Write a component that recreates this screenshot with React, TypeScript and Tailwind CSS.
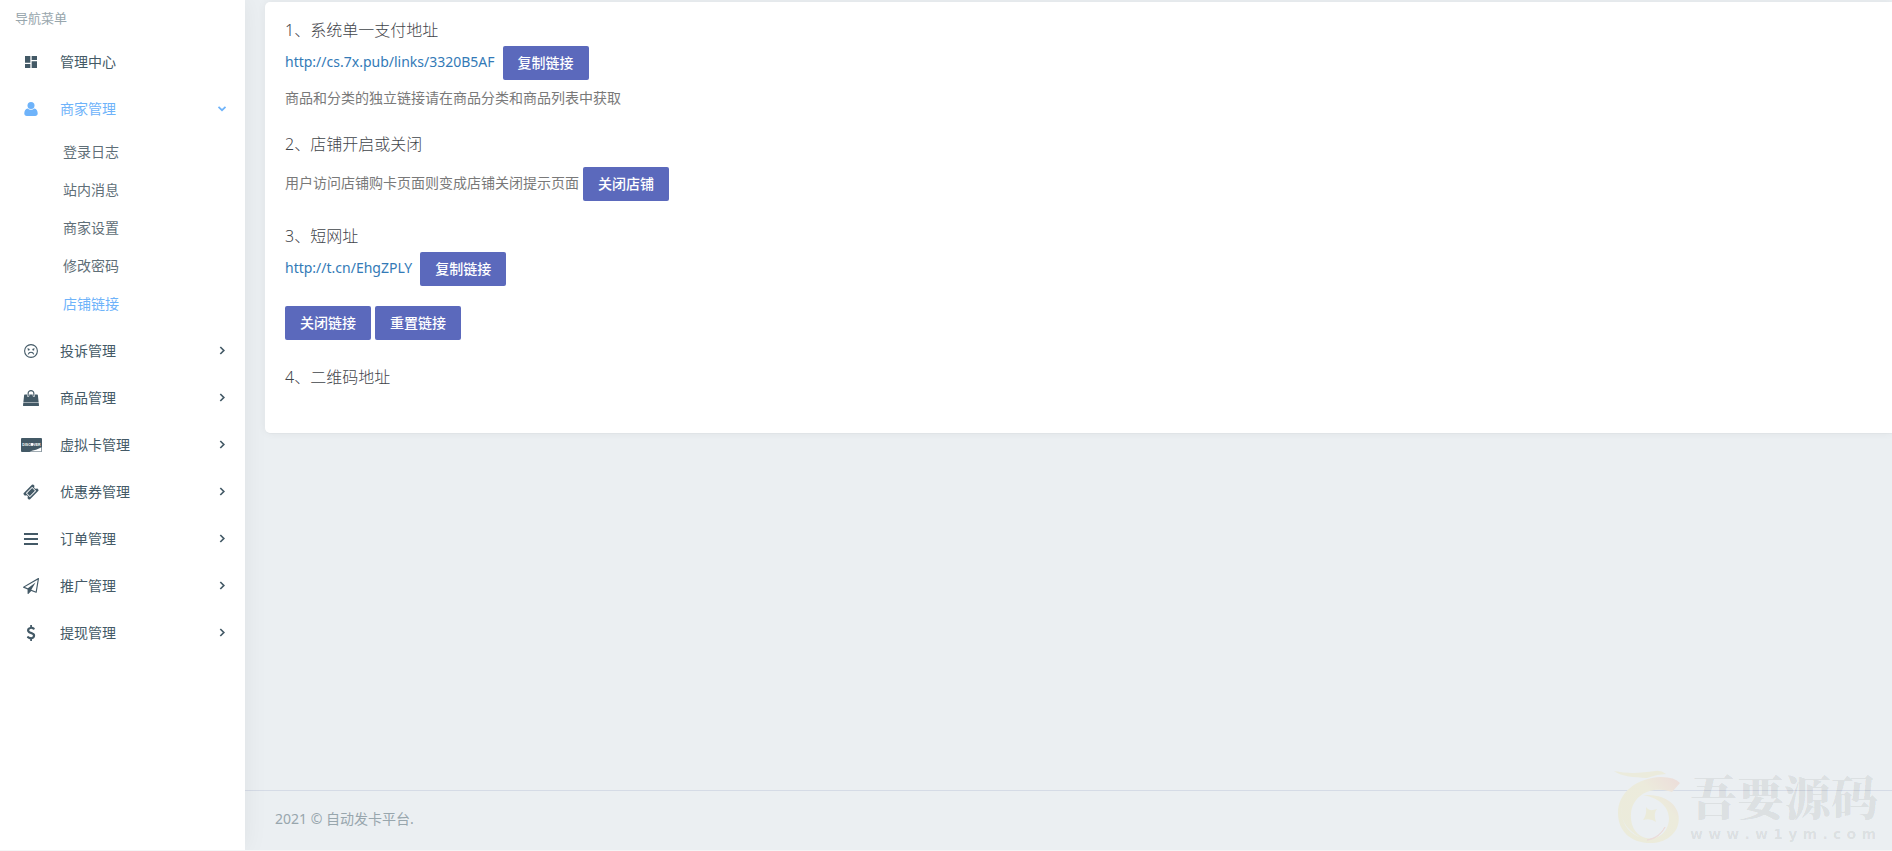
import type { ReactNode } from "react";
import { MdDashboard } from "react-icons/md";

function Glyph({ d, className }: { d: string; className: string }) {
  return (
    <svg viewBox="0 0 1792 1792" fill="currentColor" aria-hidden="true" className={className}>
      <path d={d} />
    </svg>
  );
}

const BAG =
  "M1757 1408l35 313q3 28-16 50-19 21-48 21h-1664q-29 0-48-21-19-22-16-50l35-313h1722zm-93-839l86 775h-1708l86-775q3-24 21-40.500t43-16.500h256v128q0 53 37.500 90.500t90.500 37.500 90.500-37.500 37.500-90.500v-128h384v128q0 53 37.500 90.500t90.500 37.500 90.500-37.500 37.500-90.500v-128h256q25 0 43 16.500t21 40.500zm-384-185v256q0 26-19 45t-45 19-45-19-19-45v-256q0-106-75-181t-181-75-181 75-75 181v256q0 26-19 45t-45 19-45-19-19-45v-256q0-159 112.500-271.500t271.500-112.500 271.500 112.500 112.500 271.500z";
const TICKET =
  "M1024 452l316 316-572 572-316-316zm-211 979l618-618q19-19 19-45t-19-45l-362-362q-18-18-45-18t-45 18l-618 618q-19 19-19 45t19 45l362 362q18 18 45 18t45-18zm889-637l-907 908q-37 37-90.500 37t-90.500-37l-126-126q56-56 56-136t-56-136-136-56-136 56l-125-126q-37-37-37-90.500t37-90.500l907-906q37-37 90.500-37t90.500 37l125 125q-56 56-56 136t56 136 136 56 136-56l126 125q37 37 37 90.500t-37 90.500z";
const BARS =
  "M110 224h1568v224H110zM110 784h1568v224H110zM110 1344h1568v224H110z";
const PLANE =
  "M1764 11q33 24 27 64l-256 1536q-5 29-32 45-14 8-31 8-11 0-24-5l-527-215-298 327q-18 21-47 21-14 0-23-4-19-7-30-23.500t-11-36.500v-452l-472-193q-37-14-40-55-3-39 32-59l1664-960q35-21 68 2zm-342 1499l221-1323-1434 827 336 137 863-639-478 797z";
const DOLLAR =
  "M1362 1185q0 153-99.500 263.500t-258.500 136.500v175q0 14-9 23t-23 9h-135q-13 0-22.500-9.500t-9.500-22.500v-175q-66-9-127.500-31t-101.500-44.500-74-48-46.500-37.500-17.500-18q-17-21-2-41l103-135q7-10 23-12 15-2 24 9l2 2q113 99 243 125 37 8 74 8 81 0 142.500-43t61.500-122q0-28-15-53t-33.500-42-58.500-37.500-66-32-80-32.500q-39-16-61.500-25t-61.500-26.500-62.500-31-56.500-35.500-53.500-42.500-43.500-49-35.500-58-21-66.500-8.500-78q0-138 98-242t255-134v-180q0-13 9.500-22.500t22.500-9.500h135q14 0 23 9t9 23v176q57 6 110.500 23t87 33.500 63.500 37.500 39 29 15 14q17 18 5 38l-81 146q-8 15-23 16-14 3-27-7-3-3-14.500-12t-39-26.500-58.500-32-74.500-26-85.500-11.500q-95 0-155 43t-60 111q0 26 8.500 48t29.500 41.500 39.500 33 56 31 60.500 27 70 27.500q53 20 81 31.500t76 35 75.500 42.500 62 50 53 63.500 31.500 76.500 13 94z";

function Person() {
  return (
    <svg viewBox="0 0 14 14" fill="currentColor" aria-hidden="true" className="size-3.5">
      <circle cx="7" cy="3.600" r="3.500" />
      <path d="M3.700 6.400C1.300 6.800.3 8.700.3 11.500c0 1.500 1 2.500 2.500 2.500h8.400c1.500 0 2.500-1 2.500-2.500 0-2.800-1-4.700-3.400-5.100-.9.900-2 1.400-3.300 1.400s-2.400-.5-3.300-1.400z" />
    </svg>
  );
}

function Frown() {
  return (
    <svg viewBox="0 0 14 14" fill="none" stroke="currentColor" aria-hidden="true" className="size-3.5">
      <circle cx="7" cy="7" r="6.400" strokeWidth="1.100" />
      <path d="M4.200 10.400c.5-1.500 1.600-2.100 2.800-2.100s2.300.6 2.800 2.100" strokeWidth="1.100" />
      <path d="M3.500 4.500l2.200.9M10.500 4.500l-2.200.9" strokeWidth=".7" />
      <circle cx="4.600" cy="5.700" r=".9" fill="currentColor" stroke="none" />
      <circle cx="9.400" cy="5.700" r=".9" fill="currentColor" stroke="none" />
    </svg>
  );
}

function DiscoverCard() {
  return (
    <svg viewBox="0 0 21 14" aria-hidden="true" className="h-3.5 w-[21px]">
      <rect width="21" height="14" rx="1" fill="currentColor" />
      <path d="M8.500 13.400C13 12.600 17.500 11 20.400 9.300v4.100z" fill="#fff" />
      <text
        x="10.500"
        y="7.600"
        textAnchor="middle"
        fill="#fff"
        className="font-['Liberation_Sans',sans-serif] text-[3.5px] font-bold"
      >
        DISCOVER
      </text>
      <circle cx="11" cy="6.400" r="1.300" fill="#fff" />
    </svg>
  );
}

function Chevron({ open }: { open?: boolean }) {
  return (
    <svg viewBox="0 0 10 10" fill="none" stroke="currentColor" strokeWidth="1.700" aria-hidden="true" className="size-2.5">
      <path d={open ? "M1.500 2.800L5 6.200l3.500-3.400" : "M3.300 1L6.800 4.500 3.300 8"} />
    </svg>
  );
}

type Item = { label: string; icon: ReactNode; plain?: boolean };

const topItems: Item[] = [
  { label: "管理中心", icon: <MdDashboard className="size-4" />, plain: true },
];

const subItems = ["登录日志", "站内消息", "商家设置", "修改密码", "店铺链接"];

const restItems: Item[] = [
  { label: "投诉管理", icon: <Frown /> },
  { label: "商品管理", icon: <Glyph d={BAG} className="size-4" /> },
  { label: "虚拟卡管理", icon: <DiscoverCard /> },
  { label: "优惠券管理", icon: <Glyph d={TICKET} className="size-4" /> },
  { label: "订单管理", icon: <Glyph d={BARS} className="size-4" /> },
  { label: "推广管理", icon: <Glyph d={PLANE} className="size-4" /> },
  { label: "提现管理", icon: <Glyph d={DOLLAR} className="size-4" /> },
];

function NavRow({ item, active }: { item: Item; active?: boolean }) {
  return (
    <a
      href="#"
      className={`flex h-[47px] items-center pr-[18px] pl-5 text-sm ${active ? "text-[#6eb3fa]" : "text-[#435966]"}`}
    >
      <span className="flex w-[22px] justify-center">{item.icon}</span>
      <span className="ml-[18px] flex-1">{item.label}</span>
      {!item.plain && <Chevron open={active} />}
    </a>
  );
}

function Sidebar() {
  return (
    <aside className="relative z-10 w-[245px] shrink-0 bg-white shadow-[0_0_24px_0_rgba(0,0,0,0.06),0_1px_0_0_rgba(0,0,0,0.02)]">
      <p className="h-[38px] pt-2 pl-[15px] text-[13px] leading-5 text-[#98a6ad]">导航菜单</p>
      <nav>
        {topItems.map((item) => (
          <NavRow key={item.label} item={item} />
        ))}
        <NavRow active item={{ label: "商家管理", icon: <Person /> }} />
        <ul className="pt-px pb-1">
          {subItems.map((label) => (
            <li key={label}>
              <a
                href="#"
                className={`flex h-[38px] items-center pl-[63px] text-sm ${label === "店铺链接" ? "text-[#6eb3fa]" : "text-[#5f6f78]"}`}
              >
                {label}
              </a>
            </li>
          ))}
        </ul>
        {restItems.map((item) => (
          <NavRow key={item.label} item={item} />
        ))}
      </nav>
    </aside>
  );
}

function Action({ children }: { children: ReactNode }) {
  return (
    <button type="button" className="h-[34px] rounded-xs bg-[#5b69bc] px-[15px] text-sm font-medium text-white">
      {children}
    </button>
  );
}

function Heading({ children }: { children: ReactNode }) {
  return <h4 className="text-base leading-[18px] font-light text-[#3f444a]">{children}</h4>;
}

function Watermark() {
  return (
    <div className="pointer-events-none absolute right-3 bottom-1.5 flex gap-2.5 text-black/8" aria-hidden="true">
      <svg viewBox="0 0 66 74" className="h-[74px] w-[66px]">
        <defs>
          <linearGradient id="ring" x1="0" y1="1" x2="1" y2="0">
            <stop offset="0" stopColor="#ebebda" />
            <stop offset=".65" stopColor="#ecebdc" />
            <stop offset="1" stopColor="#ecdcda" />
          </linearGradient>
        </defs>
        <path d="M0 1c14 3 28 2 41 0q6-1 11 3l-9 1-10 3C20 7 8 7 0 1z" fill="#ebebdc" />
        <path
          d="M66 13l-8 9c-4-1-6-2-9-2-17-2-31 8-32 24-1 13 6 22 15 24 11 2 19-4 22-13 4-13-4-26-25-30 15-1 31 4 35 18 4 16-8 29-25 30C18 74 4 62 4 43 4 23 22 8 47 7q14 0 19 6z"
          fill="url(#ring)"
        />
        <path d="M8 34c-3 14 4 26 18 33C13 63 5 49 8 34z" fill="#ebeff2" />
        <path d="M51 57c-4 8-10 12-18 13 9-2 14-6 18-13z" stroke="#ecdcda" fill="none" />
        <path d="M32 37q3 5 11 2-4 4-1 13-5-4-13-2 4-5 3-13z" fill="#ebebda" />
      </svg>
      <div className="flex w-[190px] flex-col">
        <span className="font-['Noto_Serif_CJK_SC','Noto_Sans_CJK_SC',serif] text-[47px] leading-[50px] font-black">吾要源码</span>
        <span className="mt-1 flex justify-between pr-1 font-['DejaVu_Sans',sans-serif] text-sm leading-5 font-bold">
          {Array.from("www.w1ym.com").map((char, index) => (
            <span key={index}>{char}</span>
          ))}
        </span>
      </div>
    </div>
  );
}

export default function App() {
  return (
    <div className="relative flex min-h-screen overflow-hidden border-b border-[#f4f5f6] bg-[#ebeff2] font-['Noto_Sans','Noto_Sans_CJK_SC',sans-serif]">
      <Sidebar />
      <div className="flex min-w-0 flex-1 flex-col">
        <main className="flex-1 pt-0.5 pl-5">
          <section className="rounded-l-[5px] bg-white px-5 pt-[19px] pb-[47px] text-sm text-[#797979] shadow-[0_0_8px_0_rgba(0,0,0,0.06),0_1px_0_0_rgba(0,0,0,0.02)]">
            <Heading>1、系统单一支付地址</Heading>
            <div className="mt-[7px] flex items-center gap-2">
              <a href="#" className="pb-0.5 text-[#337ab7]">http://cs.7x.pub/links/3320B5AF</a>
              <Action>复制链接</Action>
            </div>
            <p className="mt-2 leading-5">商品和分类的独立链接请在商品分类和商品列表中获取</p>

            <div className="mt-[27px]">
              <Heading>2、店铺开启或关闭</Heading>
            </div>
            <div className="mt-3.5 flex items-center gap-1">
              <span className="pb-0.5">用户访问店铺购卡页面则变成店铺关闭提示页面</span>
              <Action>关闭店铺</Action>
            </div>

            <div className="mt-[26px]">
              <Heading>3、短网址</Heading>
            </div>
            <div className="mt-[7px] flex items-center gap-2">
              <a href="#" className="pb-0.5 text-[#337ab7]">http://t.cn/EhgZPLY</a>
              <Action>复制链接</Action>
            </div>
            <div className="mt-5 flex gap-1">
              <Action>关闭链接</Action>
              <Action>重置链接</Action>
            </div>

            <div className="mt-7">
              <Heading>4、二维码地址</Heading>
            </div>
          </section>
        </main>
        <footer className="h-[60px] border-t border-[#d5dbe6] px-[30px] pt-[18px] text-sm text-[#98a6ad]">
          2021 © 自动发卡平台.
        </footer>
      </div>
      <Watermark />
    </div>
  );
}
